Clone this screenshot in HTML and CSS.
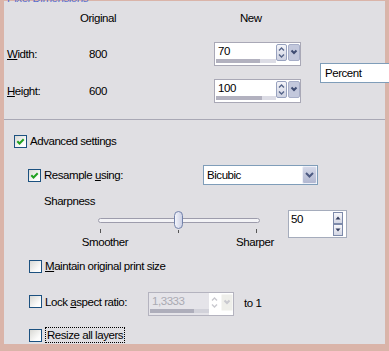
FILE: index.html
```html
<!DOCTYPE html>
<html lang="en">
<head>
  <title>Resize</title>
  <link rel="stylesheet" href="styles.css">
</head>
<body>

<div id="frame">
  <div class="legend">Pixel Dimensions</div>

  <div class="dims">
    <span class="hd orig-hd">Original</span>
    <span class="hd new-hd">New</span>

    <span class="lbl r-w"><u>W</u>idth:</span>
    <span class="orig r-w">800</span>
    <div class="spin r-w">
      <div class="spin-field">
        <span class="spin-val">70</span>
        <span class="spin-track"><span class="spin-fill" style="width:44px"></span></span>
      </div>
      <svg class="spin-btns" width="24" height="17" viewBox="0 0 24 17">
        <defs>
          <linearGradient id="sg1" x1="0" y1="0" x2="0" y2="1">
            <stop offset="0" stop-color="#f6f6fa"/>
            <stop offset="1" stop-color="#ccd0e0"/>
          </linearGradient>
        </defs>
        <rect x="0.5" y="0.5" width="10" height="16" rx="1.5" fill="url(#sg1)" stroke="#98a2bf"/>
        <path d="M3 6.5 L5.5 4 L8 6.5" fill="none" stroke="#556489" stroke-width="1.4"/>
        <path d="M3 10.5 L5.5 13 L8 10.5" fill="none" stroke="#556489" stroke-width="1.4"/>
        <rect x="12.5" y="0.5" width="11" height="16" rx="1.5" fill="#c3c8dc" stroke="#a7aec8"/>
        <path d="M15.5 6.5 L18 9 L20.5 6.5" fill="none" stroke="#3f4c72" stroke-width="2"/>
      </svg>
    </div>

    <div class="combo unit"><span class="combo-text">Percent</span></div>

    <span class="lbl r-h"><u>H</u>eight:</span>
    <span class="orig r-h">600</span>
    <div class="spin r-h">
      <div class="spin-field">
        <span class="spin-val">100</span>
        <span class="spin-track"><span class="spin-fill" style="width:46px"></span></span>
      </div>
      <svg class="spin-btns" width="24" height="17" viewBox="0 0 24 17">
        <rect x="0.5" y="0.5" width="10" height="16" rx="1.5" fill="url(#sg1)" stroke="#98a2bf"/>
        <path d="M3 6.5 L5.5 4 L8 6.5" fill="none" stroke="#556489" stroke-width="1.4"/>
        <path d="M3 10.5 L5.5 13 L8 10.5" fill="none" stroke="#556489" stroke-width="1.4"/>
        <rect x="12.5" y="0.5" width="11" height="16" rx="1.5" fill="#c3c8dc" stroke="#a7aec8"/>
        <path d="M15.5 6.5 L18 9 L20.5 6.5" fill="none" stroke="#3f4c72" stroke-width="2"/>
      </svg>
    </div>
  </div>

  <div class="adv">
    <div class="row row-adv">
      <span class="cb"><svg width="9" height="9" viewBox="0 0 9 9"><path d="M1.3 4.3 L3.5 6.5 L7.7 2.3" fill="none" stroke="#21a121" stroke-width="2"/></svg></span>
      <span>Advanced settings</span>
    </div>

    <div class="row row-res">
      <span class="cb"><svg width="9" height="9" viewBox="0 0 9 9"><path d="M1.3 4.3 L3.5 6.5 L7.7 2.3" fill="none" stroke="#21a121" stroke-width="2"/></svg></span>
      <span class="res-text">Resample <u>u</u>sing:</span>
      <div class="combo method">
        <span class="combo-text">Bicubic</span>
        <svg class="combo-btn" width="15" height="18" viewBox="0 0 15 18">
          <defs>
            <linearGradient id="cg1" x1="0" y1="0" x2="0" y2="1">
              <stop offset="0" stop-color="#d6daea"/>
              <stop offset="1" stop-color="#b0b6d0"/>
            </linearGradient>
          </defs>
          <rect x="0.5" y="0.5" width="14" height="17" rx="1.5" fill="url(#cg1)" stroke="#eef0f8"/>
          <path d="M4 7 L7.5 10.5 L11 7" fill="none" stroke="#4d5a82" stroke-width="2"/>
        </svg>
      </div>
    </div>

    <div class="row row-sharp">Sharpness</div>

    <div class="row row-slider">
      <svg class="slider" width="162" height="23" viewBox="0 0 162 23">
        <defs>
          <linearGradient id="tg1" x1="0" y1="0" x2="1" y2="0">
            <stop offset="0" stop-color="#f6f7fc"/>
            <stop offset="1" stop-color="#c9cee4"/>
          </linearGradient>
        </defs>
        <rect x="0.5" y="7.5" width="161" height="4" rx="2" fill="#f3f3f6" stroke="#9d9cac"/>
        <rect x="76.5" y="0.5" width="8" height="17" rx="4" fill="url(#tg1)" stroke="#7382aa"/>
        <line x1="2.5" y1="18" x2="2.5" y2="22" stroke="#555"/>
        <line x1="80.5" y1="19" x2="80.5" y2="22" stroke="#555"/>
        <line x1="158.5" y1="18" x2="158.5" y2="22" stroke="#555"/>
      </svg>
      <div class="spin50">
        <span class="spin-val">50</span>
        <svg width="10" height="24" viewBox="0 0 10 24">
          <defs>
            <linearGradient id="ug1" x1="0" y1="0" x2="0" y2="1">
              <stop offset="0" stop-color="#f8f8fb"/>
              <stop offset="1" stop-color="#d2d5e3"/>
            </linearGradient>
          </defs>
          <rect x="0.5" y="0.5" width="9" height="11" fill="url(#ug1)" stroke="#7d8aaa"/>
          <path d="M2.5 7.5 L5 4.5 L7.5 7.5 Z" fill="#333d5e"/>
          <rect x="0.5" y="12.5" width="9" height="11" fill="url(#ug1)" stroke="#7d8aaa"/>
          <path d="M2.5 16.5 L5 19.5 L7.5 16.5 Z" fill="#333d5e"/>
        </svg>
      </div>
    </div>

    <div class="row row-ends">
      <span class="end">Smoother</span>
      <span class="end end-r">Sharper</span>
    </div>

    <div class="row row-opt">
      <span class="cb"></span>
      <span><u>M</u>aintain original print size</span>
    </div>

    <div class="row row-opt row-lock">
      <span class="cb"></span>
      <span class="lock-text">Lock <u>a</u>spect ratio:</span>
      <div class="spin off">
        <div class="spin-field">
          <span class="spin-val">1,3333</span>
          <span class="spin-track"><span class="spin-fill" style="width:44px"></span></span>
        </div>
        <svg class="spin-btns" width="24" height="17" viewBox="0 0 24 17">
          <path d="M3 6.5 L5.5 4 L8 6.5" fill="none" stroke="#c9c9cf" stroke-width="1.4"/>
          <path d="M3 10.5 L5.5 13 L8 10.5" fill="none" stroke="#c9c9cf" stroke-width="1.4"/>
          <rect x="12.5" y="0.5" width="11" height="16" fill="#eeeeea"/>
          <path d="M15.5 6.5 L18 9 L20.5 6.5" fill="none" stroke="#c9c9cf" stroke-width="2"/>
        </svg>
      </div>
      <span class="to-one">to 1</span>
    </div>

    <div class="row row-opt row-last">
      <span class="cb"></span>
      <span class="focus">Resize all layers</span>
    </div>
  </div>
</div>

</body>
</html>
```

FILE: styles.css
```css
html, body {
  margin: 0;
  padding: 0;
  overflow: hidden;
}

body {
  background-color: #e0dfe3;
  font-family: "Liberation Sans", Arial, sans-serif;
  font-size: 11.5px;
  letter-spacing: -0.45px;
  color: #000;
}

#frame {
  box-sizing: border-box;
  height: 351px;
  border-style: solid;
  border-color: #dab4a9;
  border-width: 1px 4px 7px 4px;
}

.legend {
  margin: -9px 0 0 3px;
  height: 13px;
  line-height: 13px;
  color: #5b70cf;
}

/* pixel dimensions */
.dims {
  display: grid;
  grid-template-columns: 66px 50px 91px 106px 1fr;
  grid-template-rows: 20px 12px 27px 11px 25px;
  align-items: center;
  padding: 3px 0 16px 3px;
  line-height: 14px;
  border-bottom: 1px solid #a9a8b5;
}
.hd { grid-row: 1; }
.orig-hd { grid-column: 2; text-align: center; }
.new-hd { grid-column: 4; padding-left: 26px; }
.r-w { grid-row: 3; }
.r-h { grid-row: 5; }
.lbl { grid-column: 1; }
.orig { grid-column: 2; text-align: center; }
.dims .spin { grid-column: 4; }
.unit {
  grid-column: 5;
  grid-row: 3 / 6;
  width: 80px;
  margin-top: 2px;
}

/* spin box with value bar */
.spin {
  display: flex;
  box-sizing: border-box;
  width: 87px;
  height: 24px;
  border: 1px solid #a9a8b6;
  background: #fff;
}
.spin-field {
  box-sizing: border-box;
  width: 61px;
  display: flex;
  flex-direction: column;
  padding: 1px 0 2px 1px;
}
.spin-val {
  flex: 1;
  padding-left: 2px;
}
.spin-track {
  display: block;
  height: 4px;
  background: #dcdce5;
}
.spin-fill {
  display: block;
  height: 4px;
  background: #b2b1bf;
}
.spin-btns {
  flex: none;
  margin-top: 1px;
}
.spin.off {
  width: 86px;
  border-color: #b4b3bf;
}
.spin.off .spin-field { background: #e5e4e9; }
.spin.off .spin-val { color: #aaaab2; }
.spin.off .spin-track { background: #d2d2da; }
.spin.off .spin-fill { background: #aeaebb; }

/* combo boxes */
.combo {
  display: flex;
  box-sizing: border-box;
  height: 20px;
  border: 1px solid #7f9db9;
  background: #fff;
}
.combo-text {
  flex: 1;
  line-height: 18px;
  padding-left: 3px;
}
.unit .combo-text { padding-left: 4px; }
.method { width: 115px; }
.combo-btn { flex: none; }

/* advanced settings */
.adv {
  display: flex;
  flex-direction: column;
  padding: 11px 0 0 10px;
  line-height: 14px;
}
.row {
  display: flex;
  align-items: center;
  flex: none;
  height: 20px;
  gap: 3px;
}
.cb {
  box-sizing: border-box;
  flex: none;
  width: 13px;
  height: 13px;
  border: 1px solid #1c5180;
  background: linear-gradient(135deg, #d8d8d4, #fbfbfa 70%, #fff);
  display: flex;
  align-items: center;
  justify-content: center;
}
.row-res { margin-top: 14px; padding-left: 14px; }
.res-text { width: 156px; }
.row-sharp {
  margin-top: 10px;
  height: 12px;
  line-height: 12px;
  padding-left: 30px;
}
.row-slider {
  margin-top: 3px;
  height: 28px;
  align-items: flex-start;
  padding-left: 84px;
  gap: 0;
}
.slider { margin-top: 1px; flex: none; }
.spin50 {
  display: flex;
  box-sizing: border-box;
  width: 59px;
  height: 28px;
  margin-left: 28px;
  border: 1px solid #a5acbc;
  background: #fff;
}
.spin50 .spin-val { padding-top: 1px; }
.spin50 svg { margin: 1px 3px 0 0; }
.row-ends {
  margin-top: -2px;
  height: 12px;
  line-height: 12px;
  padding-left: 61px;
  gap: 0;
}
.end { width: 60px; text-align: center; }
.end-r { margin-left: 90px; }
.row-opt { margin-top: 8px; padding-left: 15px; }
.row-lock {
  margin-top: 15px;
  height: 25px;
  align-items: flex-start;
}
.row-lock .cb { margin-top: 4px; }
.lock-text { width: 100px; margin-top: 4px; }
.row-lock .spin { margin-top: 1px; }
.to-one { margin: 5px 0 0 7px; }
.row-last { margin-top: 10px; height: 18px; }
.focus {
  border: 1px dotted #000;
  padding: 0 1px;
  line-height: 14px;
}
```
